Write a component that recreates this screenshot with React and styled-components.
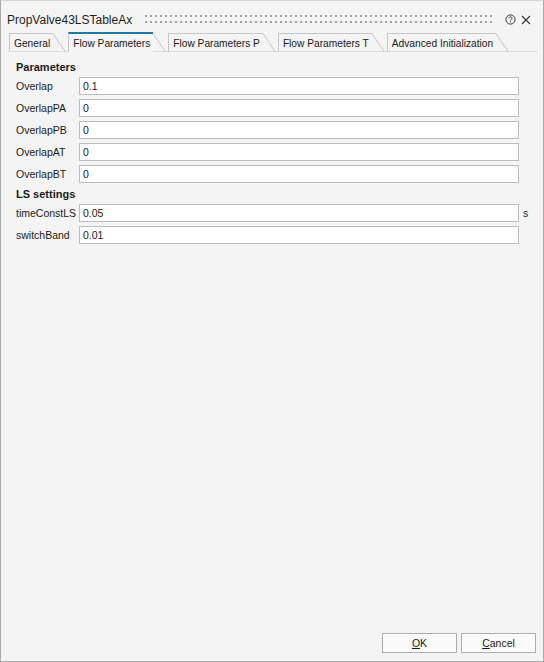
import React from 'react'
import styled, { createGlobalStyle } from 'styled-components'

const GlobalStyle = createGlobalStyle`
    html, body {
        margin: 0;
        padding: 0;
        background: #f4f4f4;
    }
    body {
        font-family: 'Liberation Sans', Arial, sans-serif;
        color: #1a1a1a;
    }
`

const tabs = [
    'General',
    'Flow Parameters',
    'Flow Parameters P',
    'Flow Parameters T',
    'Advanced Initialization',
]

const sections = [
    {
        title: 'Parameters',
        rows: [
            { label: 'Overlap', value: '0.1' },
            { label: 'OverlapPA', value: '0' },
            { label: 'OverlapPB', value: '0' },
            { label: 'OverlapAT', value: '0' },
            { label: 'OverlapBT', value: '0' },
        ],
    },
    {
        title: 'LS settings',
        rows: [
            { label: 'timeConstLS', value: '0.05', unit: 's' },
            { label: 'switchBand', value: '0.01' },
        ],
    },
]

const HelpIcon = () => (
    <svg width="11" height="11" viewBox="0 0 11 11">
        <circle cx="5.5" cy="5.5" r="4.6" fill="none" stroke="#333" strokeWidth="1" />
        <path
            d="M3.9 4.3 C3.9 3.3 4.6 2.9 5.5 2.9 C6.4 2.9 7.1 3.4 7.1 4.2 C7.1 5.1 5.6 5.3 5.6 6.4"
            fill="none"
            stroke="#333"
            strokeWidth="1"
        />
        <rect x="5.1" y="7.3" width="1" height="1" fill="#333" />
    </svg>
)

const CloseIcon = () => (
    <svg width="10" height="10" viewBox="0 0 10 10">
        <path d="M1 1 L9 9 M9 1 L1 9" stroke="#333" strokeWidth="1.1" />
    </svg>
)

const TabSlant = () => (
    <svg width="13" height="19" viewBox="0 0 13 19">
        <path d="M0 0.5 L12.5 19" stroke="#c6c6c6" strokeWidth="1" fill="none" />
    </svg>
)

const App = () => {
    return (
        <>
            <GlobalStyle />
            <Window>
                <TitleBar>
                    <Title>PropValve43LSTableAx</Title>
                    <Gripper />
                    <TitleButton>
                        <HelpIcon />
                    </TitleButton>
                    <TitleButton>
                        <CloseIcon />
                    </TitleButton>
                </TitleBar>
                <TabStrip>
                    {tabs.map((t, i) => (
                        <Tab key={t}>
                            <TabLabel $active={i === 1}>{t}</TabLabel>
                            <TabSlant />
                        </Tab>
                    ))}
                </TabStrip>
                <Content>
                    {sections.map((s) => (
                        <Section key={s.title}>
                            <Heading>{s.title}</Heading>
                            {s.rows.map((r) => (
                                <Row key={r.label}>
                                    <Label>{r.label}</Label>
                                    <Field defaultValue={r.value} />
                                    <Unit>{r.unit}</Unit>
                                </Row>
                            ))}
                        </Section>
                    ))}
                </Content>
                <Footer>
                    <Button>
                        <u>O</u>K
                    </Button>
                    <Button>
                        <u>C</u>ancel
                    </Button>
                </Footer>
            </Window>
        </>
    )
}

const Window = styled.div`
    width: 544px;
    height: 662px;
    box-sizing: border-box;
    border: 1px solid #a9a9a9;
    border-top-color: #d6d6d6;
    background: #f4f4f4;
    display: flex;
    flex-direction: column;
`

const TitleBar = styled.div`
    height: 30px;
    box-sizing: border-box;
    padding: 7px 9px 0 6px;
    display: flex;
    align-items: center;
`

const Title = styled.div`
    font-size: 12px;
    color: #1e1e1e;
    white-space: nowrap;
`

const Gripper = styled.div`
    flex: 1;
    height: 9px;
    margin: 0 9px 0 13px;
    background-image: radial-gradient(
        circle at 1px 1px,
        #a3a3a3 0.9px,
        transparent 1.1px
    );
    background-size: 5px 6px;
`

const TitleButton = styled.div`
    width: 16px;
    display: flex;
    justify-content: center;
    align-items: center;
`

const TabStrip = styled.div`
    display: flex;
    align-items: flex-end;
    height: 20px;
    margin: 0 6px 0 8px;
    border-bottom: 1px solid #dcdcdc;
`

const Tab = styled.div`
    display: flex;
    align-items: flex-end;
    margin-right: 2px;
    margin-bottom: -1px;
`

const TabLabel = styled.div`
    box-sizing: border-box;
    padding: 2px 3px 0 4px;
    border-left: 1px solid #c6c6c6;
    border-top: ${(p) => (p.$active ? '2px solid #1b7aa6' : '1px solid #c6c6c6')};
    border-bottom: 1px solid ${(p) => (p.$active ? '#f4f4f4' : '#dcdcdc')};
    margin-top: ${(p) => (p.$active ? '-1px' : '0')};
    height: ${(p) => (p.$active ? '20px' : '19px')};
    font-size: 10.2px;
    line-height: 15px;
    white-space: nowrap;
    color: #1a1a1a;
`

const Content = styled.div`
    flex: 1;
    padding: 8px 0 0 15px;
`

const Section = styled.div`
    display: flex;
    flex-direction: column;
`

const Heading = styled.div`
    font-size: 11px;
    font-weight: bold;
    line-height: 15px;
    margin-bottom: 2px;
`

const Row = styled.div`
    display: grid;
    grid-template-columns: 63px 440px auto;
    align-items: center;
    margin-bottom: 4px;
`

const Label = styled.div`
    font-size: 10.5px;
    white-space: nowrap;
`

const Field = styled.input`
    height: 18px;
    box-sizing: border-box;
    border: 1px solid #bdbdbd;
    background: #fff;
    padding: 0 3px;
    font-family: 'Liberation Sans', Arial, sans-serif;
    font-size: 10.5px;
    color: #1a1a1a;
    outline: none;
`

const Unit = styled.div`
    font-size: 10.5px;
    padding-left: 4px;
`

const Footer = styled.div`
    display: flex;
    justify-content: flex-end;
    gap: 4px;
    padding: 0 7px 8px 0;
`

const Button = styled.button`
    width: 75px;
    height: 20px;
    box-sizing: border-box;
    border: 1px solid #adadad;
    background: #fbfbfb;
    font-family: 'Liberation Sans', Arial, sans-serif;
    font-size: 10.5px;
    color: #1a1a1a;
    padding: 0;
`

export default App
